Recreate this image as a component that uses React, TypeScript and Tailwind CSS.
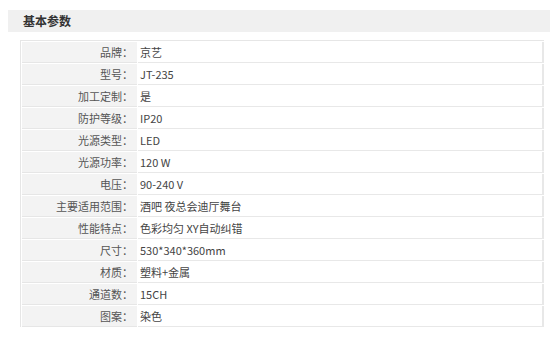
const specs: [string, string][] = [
  ['品牌', '京艺'],
  ['型号', 'JT-235'],
  ['加工定制', '是'],
  ['防护等级', 'IP20'],
  ['光源类型', 'LED'],
  ['光源功率', '120 W'],
  ['电压', '90-240 V'],
  ['主要适用范围', '酒吧 夜总会迪厅舞台'],
  ['性能特点', '色彩均匀 XY自动纠错'],
  ['尺寸', '530*340*360mm'],
  ['材质', '塑料+金属'],
  ['通道数', '15CH'],
  ['图案', '染色'],
];

export default function App() {
  return (
    <div className="w-[550px] h-[337px] bg-white pt-[10px] text-[11px] text-[#444] font-['SimSun','Noto_Sans_CJK_SC',sans-serif] leading-none overflow-hidden">
      <div className="ml-[8px] h-[22px] bg-[#f0f0f0] flex items-center pl-[15px] font-bold text-[12px] text-[#333]">
        基本参数
      </div>
      <div className="ml-[20px] mt-[8px] w-[524px] border-l border-t border-[#e6e6e6] pl-[1px] pt-[1px]">
        {specs.map(([label, value]) => (
          <div key={label} className="flex gap-[1px] mb-[1px] h-[21px]">
            <div className="w-[115px] shrink-0 bg-[#f3f3f3] border-b border-[#e6e6e6] flex items-center justify-end pr-[4px] text-[#555]">
              {label}：
            </div>
            <div className="flex-1 border-b border-r-2 border-[#e8e8e8] flex items-center pl-[2px] text-[#444]">
              {value}
            </div>
          </div>
        ))}
      </div>
    </div>
  );
}
